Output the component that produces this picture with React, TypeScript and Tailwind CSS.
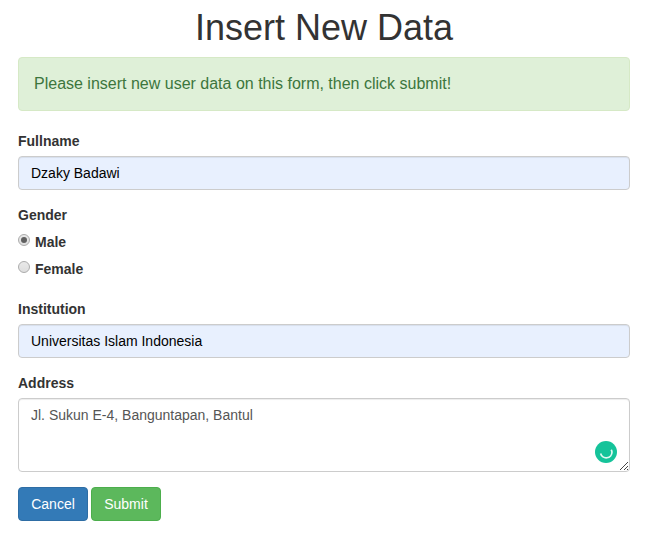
import React from "react";

type FieldProps = { id: string; label: string; value: string };

function Field({ id, label, value }: FieldProps) {
  return (
    <div className="mb-[15px]">
      <label htmlFor={id} className="mb-[5px] block font-bold">{label}</label>
      <input
        id={id}
        defaultValue={value}
        className="block h-[34px] w-full rounded-[4px] border border-[#ccc] bg-[#e8f0fe] px-3 py-[6px] text-black shadow-[inset_0_1px_1px_rgba(0,0,0,0.075)] outline-none"
      />
    </div>
  );
}

function Radio({ label, checked }: { label: string; checked?: boolean }) {
  return (
    <label className="mb-[5px] flex h-[22px] items-center pt-[2px] font-bold">
      <span className="mr-[5px] -mt-[5px] flex size-3 items-center justify-center rounded-full border border-[#acacac] bg-linear-to-b from-[#e9e9e9] to-[#dedede]">
        {checked && <span className="size-[6px] rounded-full bg-[#606060]" />}
      </span>
      {label}
    </label>
  );
}

export default function App() {
  return (
    <main className="h-[534px] overflow-hidden bg-white px-[18px] pt-2 font-['Liberation_Sans',Arial,sans-serif] text-[14px] leading-5 text-[#333]">
      <h1 className="mb-[9px] text-center text-[36px] leading-[40px] font-medium">Insert New Data</h1>
      <div className="mb-5 h-[54px] rounded-[4px] border border-[#d6e9c6] bg-[#dff0d8] p-[15px] text-[16px] leading-[22px] text-[#3c763d]">
        Please insert new user data on this form, then click submit!
      </div>
      <Field id="name" label="Fullname" value="Dzaky Badawi" />
      <div className="mb-5">
        <div className="mb-[5px] font-bold">Gender</div>
        <Radio label="Male" checked />
        <Radio label="Female" />
      </div>
      <Field id="institution" label="Institution" value="Universitas Islam Indonesia" />
      <label htmlFor="address" className="mb-[5px] block font-bold">Address</label>
      <div className="relative h-[74px]">
        <textarea
          id="address"
          defaultValue="Jl. Sukun E-4, Banguntapan, Bantul"
          className="block h-[74px] w-full resize-none rounded-[4px] border border-[#ccc] px-3 py-[6px] text-[#555] shadow-[inset_0_1px_1px_rgba(0,0,0,0.075)] outline-none"
        />
        <svg className="absolute right-[13px] bottom-[9px] size-[22px]" viewBox="0 0 22 22" fill="none">
          <circle cx="11" cy="11" r="11" fill="#15c39a" />
          <path d="M5.6 12.5a5.8 5.8 0 0 0 11.4-1.5 6 6 0 0 0-.8-2.3" stroke="#e2f8f2" strokeWidth="1.7" />
        </svg>
        <svg className="absolute right-[2px] bottom-[2px] size-2" viewBox="0 0 8 8" fill="none" stroke="#333" strokeWidth="0.9">
          <path d="M0 8 8 0M4 8l4-4M7 8l1-1" />
        </svg>
      </div>
      <div className="mt-[15px] flex gap-[3px] text-white">
        <button className="h-[34px] w-[70px] rounded-[4px] border border-[#2e6da4] bg-[#337ab7]">Cancel</button>
        <button className="h-[34px] w-[70px] rounded-[4px] border border-[#4cae4c] bg-[#5cb85c]">Submit</button>
      </div>
    </main>
  );
}
